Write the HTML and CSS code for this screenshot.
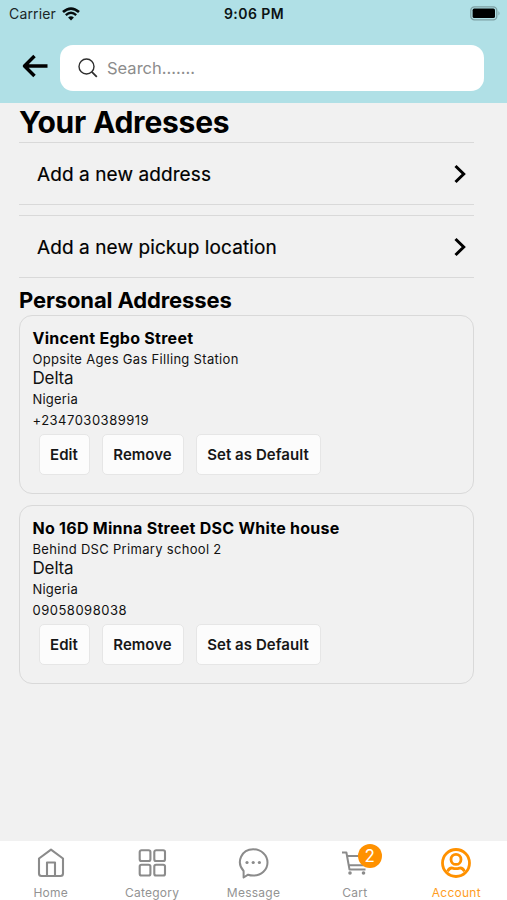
FILE: index.html
```html
<!DOCTYPE html>
<html lang="en">
<head>
<meta charset="utf-8">
<title>Your Adresses</title>
<link rel="stylesheet" href="styles.css">
</head>
<body>
<div class="app">
  <header class="header">
    <div class="status">
      <div class="carrier"><span>Carrier</span>
        <svg width="18" height="14" viewBox="0 0 18 14"><path d="M1 5.1Q9-2 17 5.1" fill="none" stroke="#050b0c" stroke-width="2.7"/><path d="M3.8 8.1Q9 3.6 14.2 8.1" fill="none" stroke="#050b0c" stroke-width="2.4"/><path d="M6.1 10.4Q9 8 11.9 10.4L9 13.5z" fill="#050b0c"/></svg>
      </div>
      <div class="time">9:06 PM</div>
      <svg class="battery" width="31" height="15" viewBox="0 0 31 15"><rect x=".8" y=".8" width="26" height="13" rx="3.6" fill="none" stroke="#7d9fa3" stroke-width="1.3"/><rect x="2.6" y="2.6" width="22.4" height="9.4" rx="1.6"/><path d="M28.5 5q2 2.3 0 4.6z" fill="#7d9fa3"/></svg>
    </div>
    <div class="searchbar">
      <svg class="back" width="26" height="24" viewBox="0 0 26 24"><path d="M12.5 2L2.5 12l10 10M2.5 12h23" fill="none" stroke="#000" stroke-width="3.5" stroke-linejoin="round"/></svg>
      <div class="search">
        <svg width="20" height="20" viewBox="0 0 20 20" fill="none" stroke="#2e2e2e" stroke-width="1.4"><circle cx="8.5" cy="8.5" r="7.5"/><path d="M13.8 13.8l5 5" stroke-width="1.8"/></svg>
        <span>Search.......</span>
      </div>
    </div>
  </header>
  <main class="content">
    <h1>Your Adresses</h1>
    <div class="row"><span>Add a new address</span><svg width="12" height="20" viewBox="0 0 12 20"><path d="M1.5 2L9.7 10l-8.2 8" fill="none" stroke="#000" stroke-width="3"/></svg></div>
    <div class="row second"><span>Add a new pickup location</span><svg width="12" height="20" viewBox="0 0 12 20"><path d="M1.5 2L9.7 10l-8.2 8" fill="none" stroke="#000" stroke-width="3"/></svg></div>
    <h2>Personal Addresses</h2>
    <section class="card">
      <h3>Vincent Egbo Street</h3>
      <p class="line">Oppsite Ages Gas Filling Station</p>
      <p class="state">Delta</p>
      <p class="country">Nigeria</p>
      <p class="phone">+2347030389919</p>
      <div class="actions"><button class="edit">Edit</button><button class="remove">Remove</button><button class="default">Set as Default</button></div>
    </section>
    <section class="card">
      <h3>No 16D Minna Street DSC White house</h3>
      <p class="line">Behind DSC Primary school 2</p>
      <p class="state">Delta</p>
      <p class="country">Nigeria</p>
      <p class="phone">09058098038</p>
      <div class="actions"><button class="edit">Edit</button><button class="remove">Remove</button><button class="default">Set as Default</button></div>
    </section>
  </main>
  <nav class="tabs">
    <a class="tab"><svg width="32" height="34" viewBox="0 0 32 34"><g fill="none" stroke="#8b8b8b" stroke-width="2.1" stroke-linejoin="round"><path d="M4 12.5L16 3.6l12 8.9v15q0 2.5-2.5 2.5h-19Q4 30 4 27.500z"/><path d="M12 30V16.500h8V30"/></g></svg><span>Home</span></a>
    <a class="tab"><svg width="32" height="34" viewBox="0 0 32 34"><g fill="none" stroke="#8b8b8b" stroke-width="2.1"><rect x="3.7" y="4.3" width="10.7" height="10.7" rx="1.8"/><rect x="18.3" y="4.3" width="10.7" height="10.7" rx="1.8"/><rect x="3.7" y="18.8" width="10.7" height="10.7" rx="1.8"/><rect x="18.3" y="18.8" width="10.7" height="10.7" rx="1.8"/></g></svg><span>Category</span></a>
    <a class="tab"><svg width="32" height="34" viewBox="0 0 32 34"><path d="M6.6 31.500V25C-1.4 16 4.700 3.300 16.200 3.300c8.200 0 14.300 5.900 14.300 13.200s-6.100 13.100-14.300 13.100c-1.8 0-3.600-.3-5.100-.9z" fill="none" stroke="#8b8b8b" stroke-width="2" stroke-linejoin="round"/><g fill="#8b8b8b"><circle cx="10" cy="16.5" r="1.6"/><circle cx="16.200" cy="16.500" r="1.6"/><circle cx="22.4" cy="16.500" r="1.6"/></g></svg><span>Message</span></a>
    <a class="tab"><span class="cart-icon"><svg width="32" height="34" viewBox="0 0 32 34"><path d="M3 6.500H7.400L10.500 23.500H26.500M8.200 10H26.500L25.500 19.300H9.800" fill="none" stroke="#8b8b8b" stroke-width="2" stroke-linejoin="round"/><circle cx="11" cy="27" r="1.8" fill="#8b8b8b"/><circle cx="24.5" cy="27" r="1.8" fill="#8b8b8b"/></svg><b class="badge">2</b></span><span>Cart</span></a>
    <a class="tab active"><svg width="32" height="34" viewBox="0 0 32 34"><g fill="none" stroke="#ff9100" stroke-width="2.8"><circle cx="16" cy="17" r="13.5"/><circle cx="16" cy="13.4" r="5"/><path d="M7.500 25.300q2-3.900 5-3.200 3.500 1.200 7 0 3-.7 5 3.200"/></g></svg><span>Account</span></a>
  </nav>
</div>
</body>
</html>
```

FILE: styles.css
```css
* { box-sizing: border-box; margin: 0; }
body { font-family: Inter, "Liberation Sans", sans-serif; color: #111; background: #f1f1f1; }
svg { display: block; flex: none; }
.app { width: 507px; height: 900px; display: flex; flex-direction: column; overflow: hidden; }
.header { height: 103px; background: #b0e0e6; flex: none; }
.status { height: 27px; display: grid; grid-template-columns: 1fr 1fr 1fr; align-items: center; padding: 0 6px 0 9px; font-size: 14px; }
.carrier { display: flex; gap: 6px; align-items: center; color: #1b2728; letter-spacing: .15px; }
.time { text-align: center; font-weight: 600; color: #0b1314; letter-spacing: .45px; margin-right: 2px; }
.battery { justify-self: end; }
.searchbar { display: flex; align-items: center; padding: 18px 23px 0 22px; }
.back { margin-right: 12px; margin-top: -5px; }
.search { flex: 1; height: 46px; border-radius: 13px; background: #fff; display: flex; align-items: center; padding-left: 18px; gap: 9px; font-size: 16.5px; color: #8c8c8c; }
.content { flex: 1; padding: 0 33px 0 19px; }
h1 { font-size: 30px; line-height: 39px; height: 39px; font-weight: 700; letter-spacing: -.22px; color: #000; white-space: nowrap; }
.row { height: 63px; border-top: 1.5px solid #d9d9d9; border-bottom: 1.5px solid #d9d9d9; padding: 0 8px 0 18px; display: flex; justify-content: space-between; align-items: center; font-size: 19px; letter-spacing: .09px; color: #000; -webkit-text-stroke: .2px #000; }
.row span { padding-top: 1px; }
.second { margin-top: 10px; }
h2 { font-size: 22px; line-height: 29px; margin-top: 8px; height: 29px; font-weight: 700; letter-spacing: -.12px; color: #000; white-space: nowrap; }
.card { height: 179px; border: 1.5px solid #d9d9d9; border-radius: 13px; padding: 11px 12px 12px 12.5px; margin-bottom: 11px; white-space: nowrap; }
h3 { font-size: 16px; line-height: 22px; font-weight: 700; letter-spacing: .27px; color: #000; }
.line { font-size: 13px; line-height: 20px; letter-spacing: .31px; }
.state { font-size: 17px; line-height: 18px; letter-spacing: -.15px; }
.country { font-size: 13px; line-height: 25px; letter-spacing: .2px; }
.phone { font-size: 13px; line-height: 16px; letter-spacing: .5px; }
.actions { display: flex; padding: 6px 0 0 6px; }
button { height: 41px; border: 1px solid #e6e6e6; border-radius: 5px; background: #fcfcfc; font: 600 15px Inter, sans-serif; color: #171717; padding: 0; letter-spacing: .05px; }
.edit { width: 51px; margin-right: 12px; }
.remove { width: 82px; margin-right: 12px; }
.default { width: 125px; }
.tabs { height: 59px; flex: none; background: #fff; display: grid; grid-template-columns: repeat(5, 1fr); }
.tab { display: flex; flex-direction: column; align-items: center; padding-top: 5px; font-size: 12px; line-height: 15px; gap: 5px; color: #939393; letter-spacing: .25px; }
.cart-icon { position: relative; }
.badge { position: absolute; left: 19px; top: -2px; width: 24px; height: 24px; border-radius: 50%; background: #ff9100; color: #fff; font-size: 17px; font-weight: 400; line-height: 24px; text-align: center; }
.active { color: #ff9d1e; }
```
